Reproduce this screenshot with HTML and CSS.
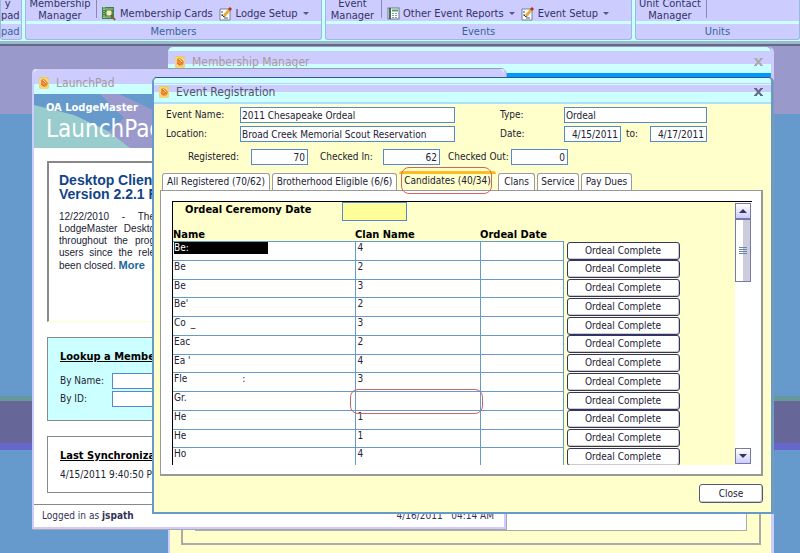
FILE: index.html
```
<!DOCTYPE html>
<html lang="en">
<head>
    <meta charset="UTF-8">
    <meta name="viewport" content="width=device-width, initial-scale=1.0">
    <title>OA LodgeMaster</title>
    <link rel="stylesheet" href="styles.css">
</head>
<body>

    <!-- shared icons -->
    <svg class="sprite" xmlns="http://www.w3.org/2000/svg">
        <symbol id="app" viewBox="0 0 12 12">
            <rect x="1" y="0" width="10" height="12" rx="2" fill="#e8cc60"/>
            <path d="M2 1h6l3 3v6l-2 2H3L1 9V3z" fill="#f0d878"/>
            <path d="M3 3l2-1 3 1 2 3-1 3-3 1-3-2z" fill="#f09030"/>
            <path d="M4 4l3 1 1 3M3 7l3 2" stroke="#e06050" fill="none"/>
            <path d="M5 3l3 3M8 2l1 2" stroke="#ffe8a0" fill="none"/>
        </symbol>
        <symbol id="cards" viewBox="0 0 15 15">
            <rect x="0" y="1" width="12" height="12" fill="#408050"/>
            <path d="M1 3h10M1 11h8" stroke="#b0d080"/>
            <path d="M2 1v12" stroke="#d8e8a0" stroke-dasharray="1 1"/>
            <circle cx="7" cy="7" r="3" fill="#e8f0c0" stroke="#90a060"/>
            <path d="M9 9l4 5" stroke="#806030" stroke-width="2"/>
        </symbol>
        <symbol id="setup" viewBox="0 0 14 14">
            <path d="M1 2h10v11H1z" fill="#fff" stroke="#7080a0"/>
            <path d="M2 5h2M2 8h2M5 11h4" stroke="#405060" stroke-width="1"/>
            <path d="M3 8l2 2 3-4" stroke="#303030" fill="none"/>
            <path d="M5 9L11 2" stroke="#e0b040" stroke-width="3"/>
            <path d="M10 3l2-2" stroke="#b03030" stroke-width="3"/>
        </symbol>
        <symbol id="report" viewBox="0 0 13 13">
            <rect x="1" y="1" width="11" height="11" fill="#fff" stroke="#607890"/>
            <path d="M3 1v11" stroke="#407050" stroke-width="2"/>
            <path d="M5 3.5h6" stroke="#50a060" stroke-width="2"/>
            <path d="M5 6.5h6M5 8.5h6M5 10.5h6" stroke="#8098b0" stroke-dasharray="2 1"/>
        </symbol>
        <symbol id="close" viewBox="0 0 9 8">
            <path d="M1 0l7 8M8 0L1 8" stroke="currentColor" stroke-width="2"/>
            <path d="M0 .5h3M6 .5h3M0 7.5h3M6 7.5h3" stroke="currentColor"/>
        </symbol>
    </svg>

    <nav class="ribbon">
        <section class="group group-first">
            <div class="tools"><button class="big">y&nbsp;&nbsp;<br>pad</button></div>
            <div class="caption">pad</div>
        </section>
        <section class="group">
            <div class="tools">
                <button class="big">Membership<br>Manager</button>
                <span class="divider"></span>
                <button class="small"><svg width="15" height="15"><use href="#cards"/></svg>Membership Cards</button>
                <button class="small"><svg width="14" height="14"><use href="#setup"/></svg>Lodge Setup<span class="arrow"></span></button>
            </div>
            <div class="caption">Members</div>
        </section>
        <section class="group">
            <div class="tools">
                <button class="big narrow">Event<br>Manager</button>
                <span class="divider"></span>
                <button class="small"><svg width="13" height="13"><use href="#report"/></svg>Other Event Reports<span class="arrow"></span></button>
                <button class="small"><svg width="14" height="14"><use href="#setup"/></svg>Event Setup<span class="arrow"></span></button>
            </div>
            <div class="caption">Events</div>
        </section>
        <section class="group">
            <div class="tools">
                <button class="big">Unit Contact<br>Manager</button>
                <span class="divider"></span>
            </div>
            <div class="caption">Units</div>
        </section>
    </nav>

    <main class="desktop">

        <div class="window membership">
            <div class="titlebar">
                <svg width="12" height="12"><use href="#app"/></svg>
                <span class="title">Membership Manager</span>
                <button class="close-x" aria-label="Close Membership Manager"><svg width="9" height="8"><use href="#close"/></svg></button>
            </div>
            <div class="strip"></div>
            <div class="membership-body">
                <div class="outer-frame"><div class="inner-frame"></div></div>
            </div>
        </div>

        <div class="window launchpad">
            <div class="titlebar">
                <svg width="12" height="12"><use href="#app"/></svg>
                <span class="title">LaunchPad</span>
            </div>
            <div class="banner">
                <svg class="banner-art" width="300" height="54">
                    <path d="M66 0h19l215 100H170L84 50 74 38 90 24z" fill="#9999cc"/>
                    <path d="M0 11l40 10 34 16 22 17H0z" fill="#99cccc"/>
                </svg>
                <div class="brand">OA LodgeMaster</div>
                <div class="product">LaunchPad</div>
            </div>
            <div class="launchpad-body">
                <div class="box news">
                    <h2>Desktop Client<br>Version 2.2.1 R</h2>
                    <p>
                        <span>12/22/2010 - The</span>
                        <span>LodgeMaster Deskto</span>
                        <span>throughout the prog</span>
                        <span>users since the rele</span>
                        been closed. <a href="#">More</a>
                    </p>
                </div>
                <div class="box lookup">
                    <h3>Lookup a Member</h3>
                    <div class="lookup-row"><label for="byName">By Name:</label><input id="byName" type="text"></div>
                    <div class="lookup-row"><label for="byId">By ID:</label><input id="byId" type="text"></div>
                </div>
                <div class="box sync">
                    <h3>Last Synchronization</h3>
                    <div>4/15/2011 9:40:50 PM</div>
                </div>
            </div>
            <div class="status">
                <span>Logged in as <b>jspath</b></span>
                <span>4/16/2011 &nbsp; 04:14 AM</span>
            </div>
        </div>

        <div class="window event">
            <div class="titlebar">
                <svg width="12" height="12"><use href="#app"/></svg>
                <span class="title">Event Registration</span>
                <button class="close-x" aria-label="Close Event Registration"><svg width="9" height="8"><use href="#close"/></svg></button>
            </div>
            <div class="event-body">
                <div class="details">
                    <label for="eventName">Event Name:</label>
                    <input id="eventName" type="text" value="2011 Chesapeake Ordeal">
                    <label class="second" for="type">Type:</label>
                    <input id="type" type="text" value="Ordeal">
                    <label for="location">Location:</label>
                    <input id="location" type="text" value="Broad Creek Memorial Scout Reservation">
                    <label class="second" for="from">Date:</label>
                    <div class="dates">
                        <input id="from" class="num" type="text" value="4/15/2011">
                        <label for="to">to:</label>
                        <input id="to" class="num" type="text" value="4/17/2011">
                    </div>
                </div>
                <div class="counts">
                    <label for="registered">Registered:</label><input id="registered" class="num" type="text" value="70">
                    <label for="checkedIn">Checked In:</label><input id="checkedIn" class="num" type="text" value="62">
                    <label for="checkedOut">Checked Out:</label><input id="checkedOut" class="num" type="text" value="0">
                </div>

                <div class="tabs">
                    <button class="tab tab-all">All Registered (70/62)</button>
                    <button class="tab tab-brotherhood">Brotherhood Eligible (6/6)</button>
                    <button class="tab tab-candidates active">Candidates (40/34)<span class="mark"></span></button>
                    <button class="tab tab-clans">Clans</button>
                    <button class="tab tab-service">Service</button>
                    <button class="tab tab-dues">Pay Dues</button>
                </div>

                <div class="panel">
                    <div class="subform">
                        <div class="records">
                            <div class="ceremony">
                                <label for="ceremony">Ordeal Ceremony Date</label>
                                <input id="ceremony" type="text">
                            </div>
                            <table>
                                <thead>
                                    <tr><th class="col-name">Name</th><th class="col-clan">Clan Name</th><th class="col-date">Ordeal Date</th><th class="col-action"></th></tr>
                                </thead>
                                <tbody>
                                    <tr><td><span class="selected">Be:</span></td><td>4</td><td></td><td><button>Ordeal Complete</button></td></tr>
                                    <tr><td>Be</td><td>2</td><td></td><td><button>Ordeal Complete</button></td></tr>
                                    <tr><td>Be</td><td>3</td><td></td><td><button>Ordeal Complete</button></td></tr>
                                    <tr><td>Be'</td><td>2</td><td></td><td><button>Ordeal Complete</button></td></tr>
                                    <tr><td>Co <span class="rest">_</span></td><td>3</td><td></td><td><button>Ordeal Complete</button></td></tr>
                                    <tr><td>Eac</td><td>2</td><td></td><td><button>Ordeal Complete</button></td></tr>
                                    <tr><td>Ea '</td><td>4</td><td></td><td><button>Ordeal Complete</button></td></tr>
                                    <tr><td>Fle<span class="rest far">:</span></td><td>3</td><td></td><td><button>Ordeal Complete</button></td></tr>
                                    <tr><td>Gr.</td><td class="marked"><span class="mark"></span></td><td></td><td><button>Ordeal Complete</button></td></tr>
                                    <tr><td>He</td><td>1</td><td></td><td><button>Ordeal Complete</button></td></tr>
                                    <tr><td>He</td><td>1</td><td></td><td><button>Ordeal Complete</button></td></tr>
                                    <tr><td>Ho</td><td>4</td><td></td><td><button>Ordeal Complete</button></td></tr>
                                </tbody>
                            </table>
                        </div>
                        <div class="scrollbar">
                            <button class="up" aria-label="Scroll up"></button>
                            <div class="thumb"></div>
                            <button class="down" aria-label="Scroll down"></button>
                        </div>
                    </div>
                </div>

                <div class="footer"><button class="close">Close</button></div>
            </div>
        </div>

    </main>

</body>
</html>
```
FILE: styles.css
```
* {
    box-sizing: border-box;
}
body {
    margin: 0;
    height: 100vh;
    display: flex;
    flex-direction: column;
    overflow: hidden;
    font-family: "DejaVu Sans Condensed", "DejaVu Sans", sans-serif;
    font-size: 10px;
    line-height: 12px;
    color: #222233;
}
button, input {
    font: inherit;
    color: inherit;
    margin: 0;
    padding: 0;
}
input {
    height: 16px;
    min-width: 0;
    width: 100%;
    padding: 0 1px;
    border: 1px solid #5588cc;
    border-radius: 0;
    background: #fff;
}
.num {
    padding-right: 2px;
    text-align: right;
}
.sprite {
    position: absolute;
    width: 0;
    height: 0;
}

/* Ribbon */
.ribbon {
    display: grid;
    grid-template-columns: 22fr 297fr 307fr 165fr;
    gap: 3px;
    height: 46px;
    flex: none;
    background: #ccffff;
    border-bottom: 2px solid #666688;
    box-shadow: inset 0 -3px #99bbcc;
    font-size: 11px;
}
.group {
    height: 40px;
    overflow: hidden;
    background: #ccccff;
    border: 1px solid #99bbdd;
    border-top: 0;
    border-radius: 0 0 3px 3px;
    color: #333366;
}
.tools {
    display: flex;
    height: 21px;
    align-items: flex-end;
}
.ribbon button {
    border: 0;
    background: none;
    white-space: nowrap;
}
.ribbon .big {
    width: 68px;
    flex: none;
    margin-bottom: -1px;
}
.ribbon .narrow {
    width: 53px;
}
.group-first .big {
    width: 16px;
    text-align: right;
}
.group-first .caption {
    text-align: left;
}
.divider {
    width: 1px;
    height: 18px;
    margin: 0 5px 3px 2px;
    background: #8888bb;
}
.small {
    display: flex;
    align-items: center;
    gap: 3px;
    height: 15px;
}
.small + .small {
    margin-left: 6px;
}
.arrow {
    margin-left: 2px;
    border: 3px solid transparent;
    border-top-color: #555588;
    border-bottom: 0;
}
.caption {
    height: 19px;
    border-top: 3px solid #ccffff;
    text-align: center;
    line-height: 16px;
    color: #336699;
}

/* Desktop and windows */
.desktop {
    position: relative;
    flex: 1;
    overflow: hidden;
    background: linear-gradient(#9999cc 68px, #6699cc 68px, #6699cc 350px, #669999 350px, #669999 355px, #666699 355px, #666699 397px, #6666cc 397px, #6666cc 404px, #6699cc 404px);
}
.window {
    position: absolute;
    border-radius: 5px 5px 0 0;
}
.titlebar {
    display: flex;
    align-items: center;
    gap: 6px;
    height: 26px;
    padding: 3px 8px 0 6px;
    border-radius: 5px 5px 0 0;
    font-size: 12px;
    color: #aa9999;
    background: linear-gradient(#ccffff 4px, #ccccff 4px, #ccccff 17px, #ccffff 17px);
}
.title {
    flex: 1;
}
.close-x {
    display: flex;
    border: 0;
    background: none;
    color: #aaaaaa;
}

/* Membership Manager */
.membership {
    top: 1px;
    left: 168px;
    right: 26px;
    bottom: 0;
    display: flex;
    flex-direction: column;
    border-right: 3px solid #ccccff;
}
.membership .strip {
    height: 4px;
    background: #0099ff;
}
.membership-body {
    flex: 1;
    display: flex;
    padding: 8px 10px 8px 11px;
    border-left: 2px solid #ccccff;
    background: #ffffcc;
}
.outer-frame {
    flex: 1;
    display: flex;
    padding: 12px;
    border: 2px solid #aaaaaa;
}
.inner-frame {
    flex: 1;
    border: 1px solid #aaaaaa;
    background: #fff;
}

/* LaunchPad */
.launchpad {
    top: 22px;
    left: 32px;
    width: 474px;
    border: 2px solid #ccccff;
    border-top: 1px solid #9999bb;
    box-shadow: 1px 1px #aaaaaa;
    background: #fff;
}
.launchpad .titlebar {
    height: 25px;
    padding-left: 4px;
    background: linear-gradient(#ccccff 15px, #ccffff 15px);
}
.banner {
    position: relative;
    height: 54px;
    padding: 8px 12px;
    background: #6699cc;
    color: #fff;
}
.banner-art {
    position: absolute;
    inset: 0;
}
.brand, .product {
    position: relative;
}
.brand {
    font-size: 11px;
    font-weight: bold;
}
.product {
    font-size: 24px;
    line-height: 30px;
}
.launchpad-body {
    display: flex;
    flex-direction: column;
    gap: 15px;
    padding: 13px 13px 11px;
}
.box {
    border: 1px solid #888888;
    padding: 12px;
}
.box h2 {
    margin: 0 0 10px;
    font: bold 14px/14px "Liberation Sans", sans-serif;
    color: #114488;
}
.box h3 {
    width: 96px;
    margin: 0 0 9px;
    overflow: hidden;
    font-size: 11px;
    line-height: 14px;
    white-space: nowrap;
    text-decoration: underline;
    color: #000;
}
.news {
    height: 161px;
    padding: 10px;
    border-width: 2px 1px 1px 2px;
    border-bottom-color: #ffffcc;
}
.news p {
    margin: 0;
    width: 96px;
    font: 10px/12px "Liberation Sans", sans-serif;
    white-space: nowrap;
}
.news span {
    display: block;
    text-align-last: justify;
}
.news a {
    font-size: 11px;
    font-weight: bold;
    color: #226699;
    text-decoration: none;
}
.lookup {
    height: 84px;
    background: #ccffff;
}
.lookup-row {
    display: grid;
    grid-template-columns: 52px 150px;
    align-items: center;
    margin-bottom: 2px;
}
.sync {
    height: 57px;
}
.sync h3 {
    margin-bottom: 6px;
}
.status {
    display: flex;
    justify-content: space-between;
    padding: 5px 10px 5px 8px;
    border-top: 1px solid #888888;
    color: #333355;
}

/* Event Registration */
.event {
    top: 31px;
    left: 152px;
    right: 27px;
    border: 2px solid #6699cc;
    border-top: 1px solid #335588;
    box-shadow: 1px 0 #8899aa;
    background: #ffffcc;
}
.event .titlebar {
    border-bottom: 2px solid #b0dcff;
    padding-left: 4px;
    color: #555566;
    background: linear-gradient(#ccffff 5px, #ccccff 5px, #ccccff 6px, #ccffff 6px, #ccffff 7px, #ccccff 7px, #ccccff 14px, #ccffff 14px);
}
.event .close-x {
    color: #666688;
}
.event-body {
    padding: 3px 8px 9px 6px;
}
.details {
    display: grid;
    grid-template-columns: 74px 215px 109px 143px;
    row-gap: 3px;
    align-items: center;
    padding-left: 6px;
}
.details .second {
    padding-left: 45px;
}
.dates {
    display: grid;
    grid-template-columns: 57px 1fr 57px;
    align-items: center;
}
.dates label {
    padding-left: 5px;
}
.counts {
    display: grid;
    grid-template-columns: 63px 57px 75px 57px 71px 57px;
    align-items: center;
    margin-top: 7px;
    padding-left: 28px;
}
.counts label:not(:first-child) {
    padding-left: 12px;
    white-space: nowrap;
}
.counts label:last-of-type {
    padding-left: 8px;
}
.tabs {
    display: flex;
    align-items: flex-end;
    gap: 2px;
    height: 25px;
    padding-left: 2px;
}
.tab {
    height: 17px;
    border: 1px solid #9999aa;
    border-bottom: 0;
    border-radius: 3px 3px 0 0;
    background: #fff;
    white-space: nowrap;
}
.tab-all { width: 108px; }
.tab-brotherhood { width: 125px; }
.tab-candidates { width: 97px; }
.tab-clans { width: 37px; }
.tab-service { width: 42px; }
.tab-dues { width: 51px; }
.tab.active {
    position: relative;
    height: 19px;
    border: 0;
    border-top: 3px solid #ffbb22;
    padding-bottom: 2px;
    background: #ffffcc;
}
.mark {
    position: absolute;
    inset: -7px 4px -4px 2px;
    border: 1px solid #cc6666;
    border-radius: 8px;
}
.panel {
    padding: 10px 9px 9px 11px;
    border: 1px solid #999999;
    border-right-width: 2px;
    border-bottom-width: 2px;
    background: #fff;
}
.subform {
    display: flex;
    height: 264px;
    overflow: hidden;
    border-left: 1px solid #000;
    border-top: 1px solid #000;
    background: #ffffcc;
}
.records {
    flex: 1;
}
.ceremony {
    display: grid;
    grid-template-columns: 157px 65px;
    height: 27px;
    padding-left: 12px;
    font-size: 11px;
    font-weight: bold;
    line-height: 15px;
    color: #000;
}
.ceremony input {
    height: 19px;
    background: #ffff99;
}
table {
    table-layout: fixed;
    width: 507px;
    height: 238px;
    border-collapse: collapse;
}
th {
    height: 12px;
    padding: 0;
    font-size: 11px;
    text-align: left;
    color: #000;
}
.col-name { width: 182px; }
.col-clan { width: 125px; }
.col-date { width: 83px; }
td {
    padding: 0 1px;
    border: 1px solid #6699cc;
    border-left-width: 0;
    background: #fff;
    vertical-align: top;
}
td:nth-child(2) {
    padding-left: 2px;
}
td:last-child {
    padding: 0 1px 0 3px;
    border: 0;
    background: none;
}
td button {
    display: block;
    width: 113px;
    height: 18px;
    border: 1px solid #333366;
    border-radius: 3px;
    box-shadow: inset -1px -1px #cccccc;
    background: #fff;
}
.selected {
    display: inline-block;
    width: 94px;
    background: #000;
    color: #fff;
}
.rest {
    margin-left: 2px;
}
.rest.far {
    margin-left: 55px;
}
.marked {
    position: relative;
}
.marked .mark {
    inset: -3px -3px -4px -6px;
}
.scrollbar {
    display: flex;
    flex-direction: column;
    width: 17px;
    padding: 1px 1px 1px 0;
    background: #fff;
}
.scrollbar button {
    height: 16px;
    border: 1px solid #7777aa;
    background: linear-gradient(#fff, #ccccff);
}
.up::before, .down::before {
    content: "";
    display: block;
    width: 0;
    margin: auto;
    border: 4px solid transparent;
    border-top: 0;
    border-bottom-color: #333366;
}
.down::before {
    border-top: 4px solid #333366;
    border-bottom: 0;
}
.thumb {
    height: 63px;
    margin-bottom: auto;
    border: 1px solid #7777aa;
    background:
        repeating-linear-gradient(#6688aa 0 1px, transparent 1px 2px) center / 8px 7px no-repeat,
        linear-gradient(90deg, #fff 50%, #ccccdd 50%);
}
.footer {
    display: flex;
    justify-content: flex-end;
    margin-top: 8px;
}
.close {
    width: 64px;
    height: 19px;
    border: 1px solid #555577;
    border-radius: 3px;
    box-shadow: inset -1px -1px #cccccc;
    background: #fff;
}
```
